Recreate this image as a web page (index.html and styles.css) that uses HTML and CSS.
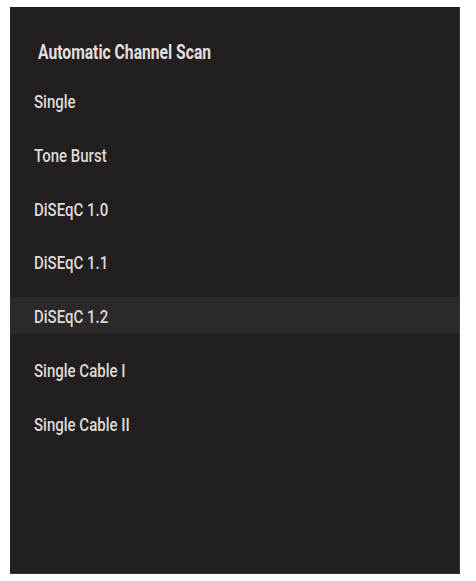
FILE: index.html
```html
<!DOCTYPE html>
<html>
<head>
<meta charset="utf-8">
<link rel="stylesheet" href="styles.css">
</head>
<body>
<div class="panel">
  <div class="title"><span class="label">Automatic Channel Scan</span></div>
  <ul class="list">
    <li class="item"><span class="label">Single</span></li>
    <li class="item"><span class="label">Tone Burst</span></li>
    <li class="item"><span class="label">DiSEqC 1.0</span></li>
    <li class="item"><span class="label">DiSEqC 1.1</span></li>
    <li class="item selected"><span class="label">DiSEqC 1.2</span></li>
    <li class="item"><span class="label">Single Cable I</span></li>
    <li class="item"><span class="label">Single Cable II</span></li>
  </ul>
</div>
</body>
</html>
```
FILE: styles.css
```css
html, body {
  margin: 0;
  padding: 0;
  background: #ffffff;
}
body {
  padding: 7px 0 0 10px;
  font-family: Roboto, "Liberation Sans", sans-serif;
}
.panel {
  box-sizing: border-box;
  width: 450px;
  height: 567px;
  background: #231f20;
  border-right: 1px solid #3a3738;
  border-bottom: 1px solid #3a3738;
  color: #dcd9d6;
}
.label {
  display: inline-block;
  transform-origin: left center;
  white-space: nowrap;
}
.title {
  padding: 33px 0 0 28px;
  font-size: 21px;
  line-height: 24px;
  font-weight: 700;
  color: #e2dfdc;
}
.title .label {
  transform: scaleX(0.746);
}
.list {
  list-style: none;
  margin: 0;
  padding: 0;
  margin-top: 18px;
  display: flex;
  flex-direction: column;
  gap: 16.75px;
}
.item {
  height: 37px;
  line-height: 37px;
  padding: 1px 0 0 24px;
  box-sizing: border-box;
  font-size: 19px;
  font-weight: 500;
}
.item .label {
  transform: scaleX(0.79);
}
.item.selected {
  background: #2c292a;
}
```
